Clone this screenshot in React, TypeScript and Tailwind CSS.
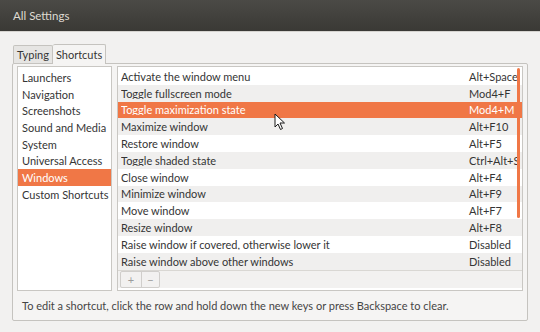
import React from 'react';

const sections = [
  'Launchers',
  'Navigation',
  'Screenshots',
  'Sound and Media',
  'System',
  'Universal Access',
  'Windows',
  'Custom Shortcuts',
];

const shortcuts = [
  { name: 'Activate the window menu', accel: 'Alt+Space' },
  { name: 'Toggle fullscreen mode', accel: 'Mod4+F' },
  { name: 'Toggle maximization state', accel: 'Mod4+M' },
  { name: 'Maximize window', accel: 'Alt+F10' },
  { name: 'Restore window', accel: 'Alt+F5' },
  { name: 'Toggle shaded state', accel: 'Ctrl+Alt+S' },
  { name: 'Close window', accel: 'Alt+F4' },
  { name: 'Minimize window', accel: 'Alt+F9' },
  { name: 'Move window', accel: 'Alt+F7' },
  { name: 'Resize window', accel: 'Alt+F8' },
  { name: 'Raise window if covered, otherwise lower it', accel: 'Disabled' },
  { name: 'Raise window above other windows', accel: 'Disabled' },
];

const Cursor = () => (
  <svg width="12" height="18" viewBox="0 0 12 18" className="absolute left-[274px] top-[113px]">
    <path d="M1 1 L1 14 L4 11 L6.5 16.5 L8.5 15.5 L6 10 L10.5 10 Z" fill="#ffffff" stroke="#1a1a1a" strokeWidth="1" strokeLinejoin="round" />
  </svg>
);

const App = () => {
  return (
    <div className="w-[540px] h-[332px] bg-[#f2f1f0] text-[#353535] font-['Lato',sans-serif] text-[11px] leading-none relative overflow-hidden">
      <div className="h-[31px] bg-gradient-to-b from-[#4b4a46] to-[#3a3935] flex items-center px-[13px] text-[11.5px] text-[#dfdbd2]">
        All Settings
      </div>
      <div className="h-[1px] bg-[#d6d4d0]" />

      <div className="px-[12px] pt-[11px]">
        <div className="flex items-end h-[20px] pl-[1px]">
          <div className="h-[18px] px-[3px] flex items-center bg-[#e6e5e3] border border-b-0 border-[#c5c3bf] rounded-t-[2px]">
            Typing
          </div>
          <div className="h-[20px] px-[3px] flex items-center bg-[#f5f4f3] border border-b-0 border-l-0 border-[#c5c3bf] rounded-t-[2px] relative top-[1px]">
            Shortcuts
          </div>
        </div>

        <div className="w-[516px] h-[258px] border border-[#c5c3bf] rounded-[2px] bg-[#f5f4f3] pt-[2px] pl-[4px] flex flex-col">
          <div className="flex gap-[5px]">
            <div className="w-[95px] h-[225px] bg-white border border-[#c9c7c3] pt-[2px]">
              {sections.map((s) => (
                <div
                  key={s}
                  className={`h-[16.7px] flex items-center pl-[4px] whitespace-nowrap ${
                    s === 'Windows' ? 'bg-[#f07746] text-white' : ''
                  }`}
                >
                  {s}
                </div>
              ))}
            </div>

            <div className="w-[406px] h-[225px] bg-white border border-[#c9c7c3] flex flex-col relative">
              <div className="pt-[1px] flex-1">
                {shortcuts.map((r, i) => (
                  <div
                    key={r.name}
                    className={`h-[16.8px] flex items-center pl-[3px] whitespace-nowrap overflow-hidden ${
                      i === 2 ? 'bg-[#f07746] text-white' : i % 2 === 1 ? 'bg-[#f0efee]' : 'bg-white'
                    }`}
                  >
                    <span className="w-[348px] shrink-0 overflow-hidden">{r.name}</span>
                    <span className="shrink-0">{r.accel}</span>
                  </div>
                ))}
              </div>
              <div className="h-[19px] bg-[#f2f1f0] border-t border-[#d9d7d3] flex items-center pl-[2px] mb-[3px]">
                <div className="flex border border-[#d0cecb] rounded-[2px] h-[17px]">
                  <div className="w-[21px] flex items-center justify-center text-[#9b9b9b] border-r border-[#d0cecb]">+</div>
                  <div className="w-[17px] flex items-center justify-center text-[#9b9b9b]">−</div>
                </div>
              </div>
              <div className="absolute right-[2px] top-[1px] w-[3px] h-[150px] bg-[#f07746] rounded-full" />
            </div>
          </div>
          <div className="flex-1 flex items-center pl-[5px] text-[#454545]">
            To edit a shortcut, click the row and hold down the new keys or press Backspace to clear.
          </div>
        </div>
      </div>
      <Cursor />
    </div>
  );
};

export default App;
